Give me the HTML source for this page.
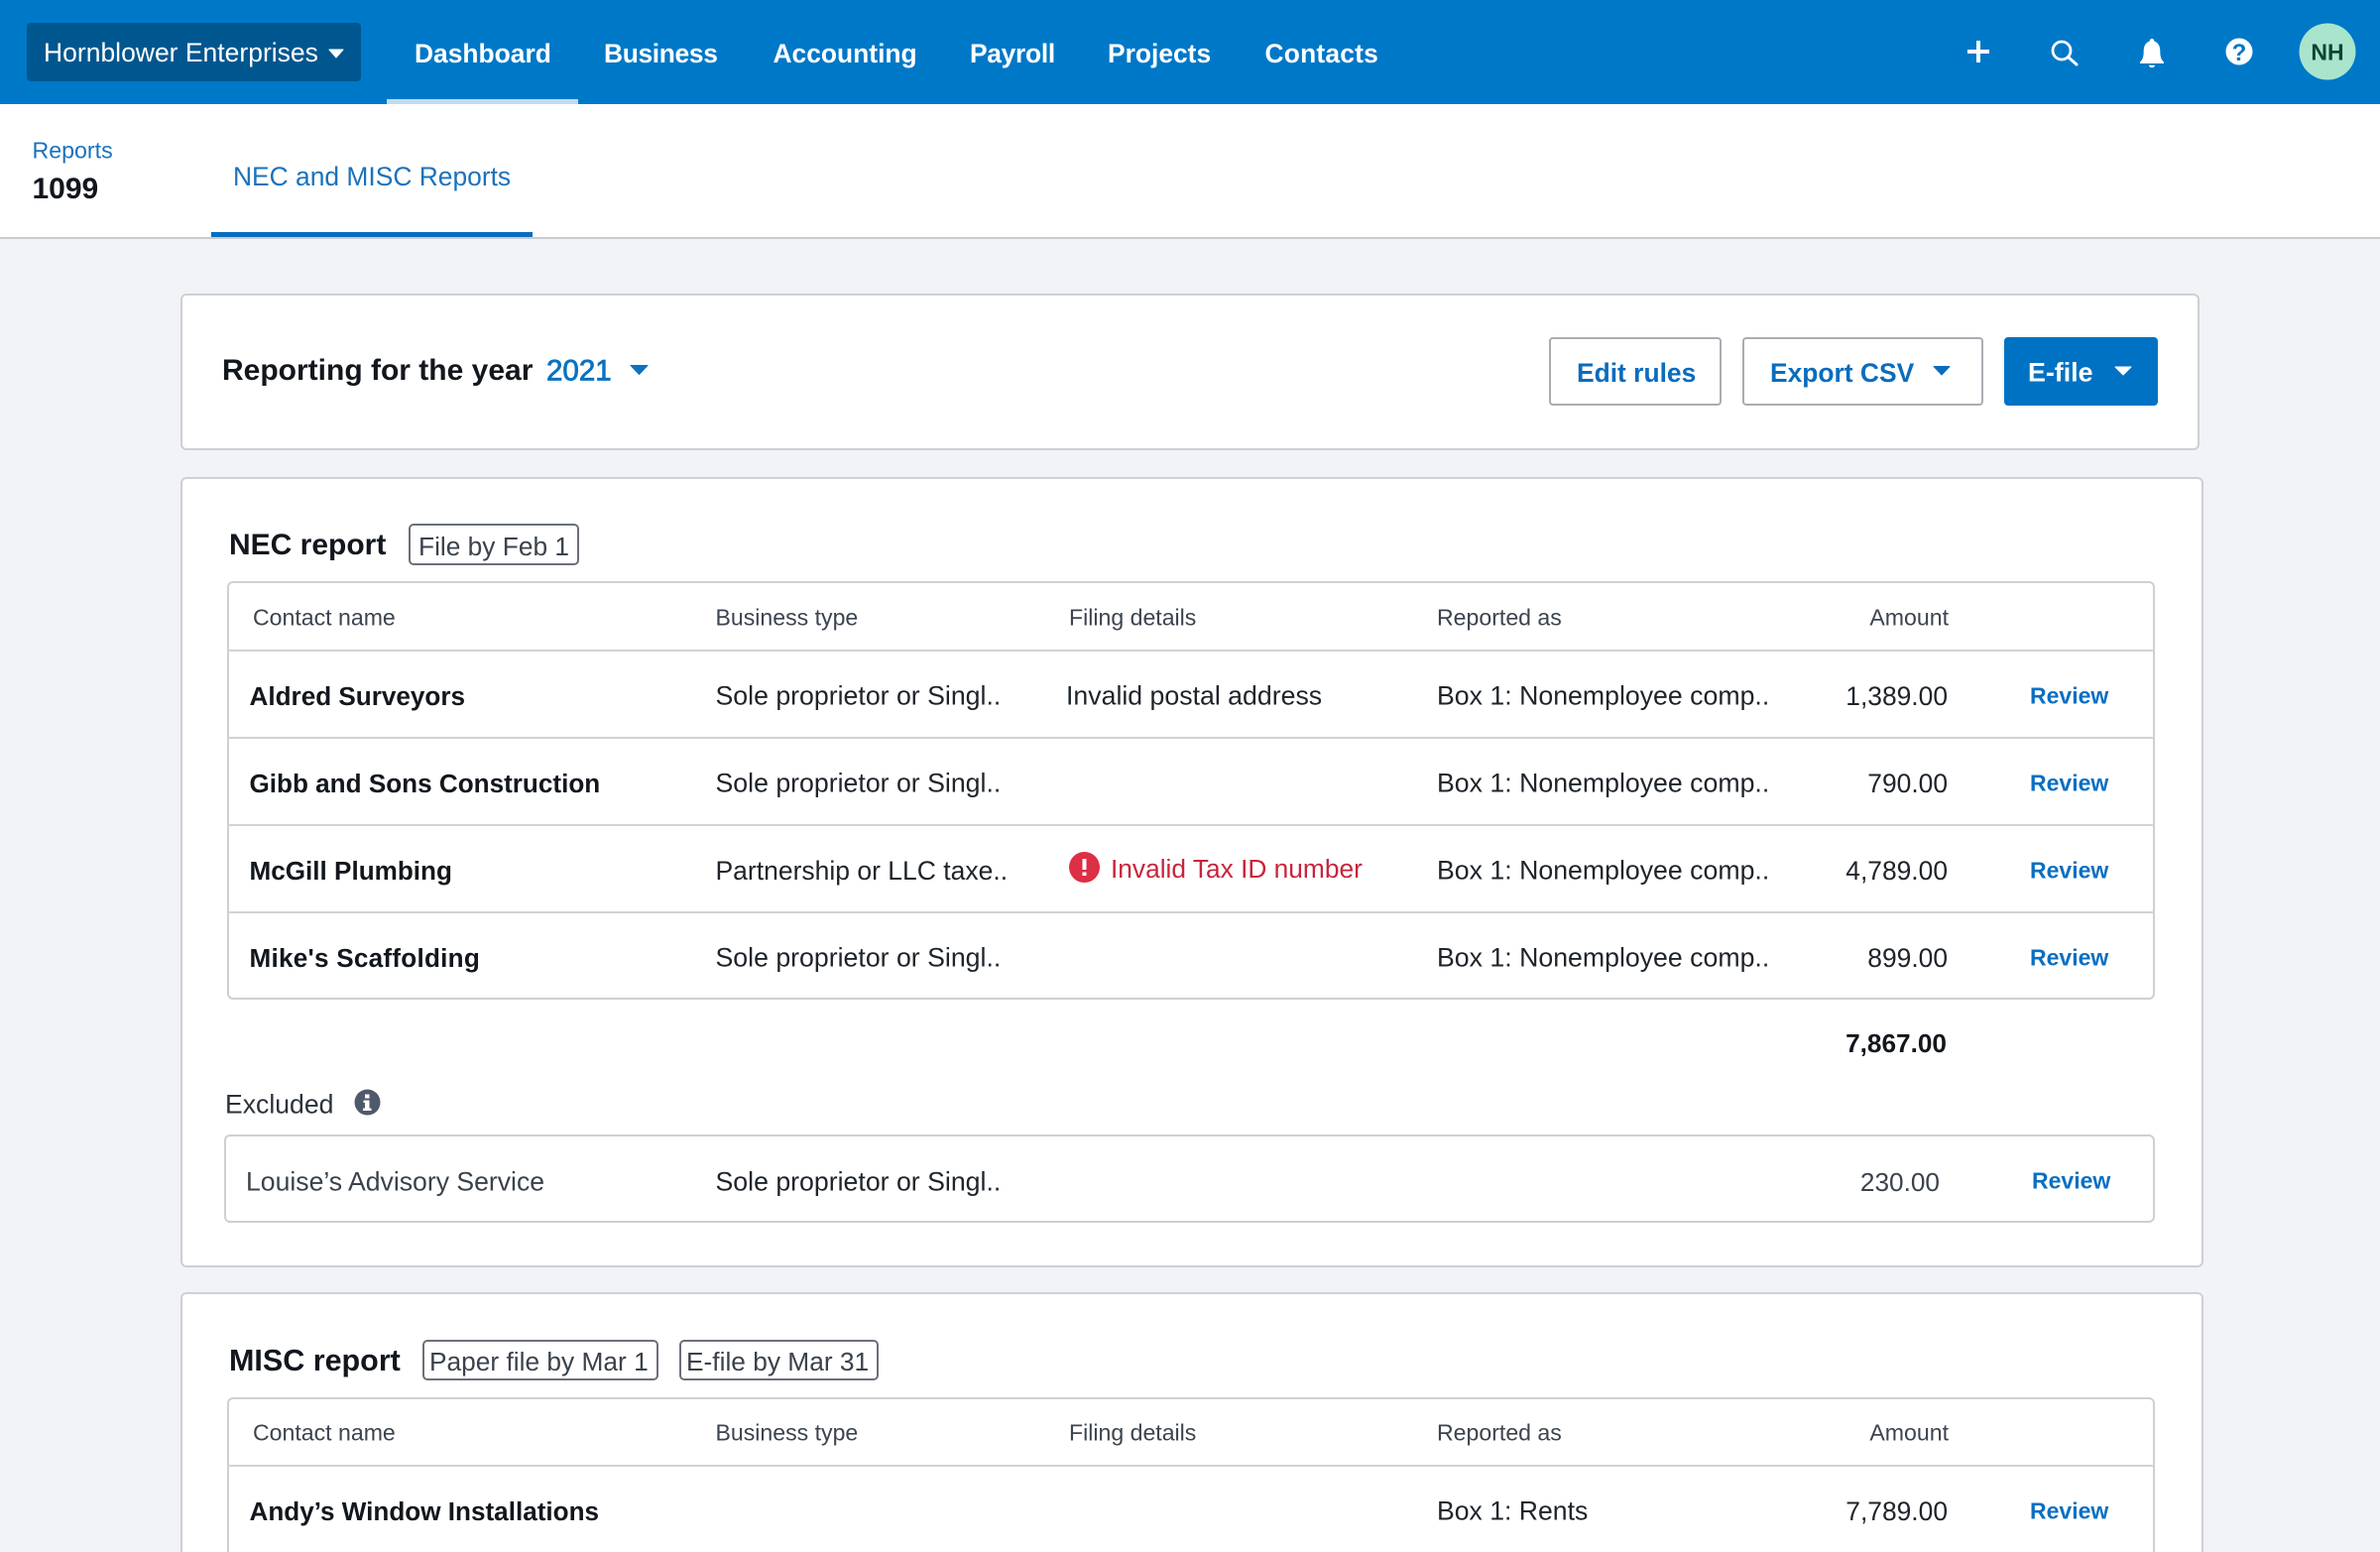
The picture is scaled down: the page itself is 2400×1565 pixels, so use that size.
<!DOCTYPE html>
<html><head><meta charset="utf-8"><title>1099 Reports</title>
<style>
html,body{margin:0;padding:0;width:2400px;height:1565px;overflow:hidden;background:#f2f3f7}
body{position:relative;font-family:"Liberation Sans",Arial,sans-serif;color:#1a1f26}
.t{position:absolute;white-space:nowrap;line-height:1;transform:translateY(-50%)}
.r{transform:translate(-100%,-50%)}
.b{font-weight:700}
.box{position:absolute;box-sizing:border-box;background:#fff;border:2px solid #cdd0d4;border-radius:6px}
.line{position:absolute;height:2px;background:#d0d3d7}
.nav{color:#fff;font-weight:700;font-size:26.4px;top:54px}
.h{font-size:23.1px;color:#3b444f}
.c{font-size:26.7px;color:#1f242b}
.n{font-size:26.1px;font-weight:700;color:#12171d}
.a{color:#0a6fc2;font-size:23px;font-weight:700}
.tag{position:absolute;box-sizing:border-box;border:2px solid #6a7079;border-radius:5px;background:#fff}
.tg{font-size:26.3px;color:#3a424c}
.btn{position:absolute;box-sizing:border-box;height:69px;top:340px;background:#fff;border:2px solid #a9adb2;border-radius:4px}
.bt{font-size:26.4px;font-weight:700;color:#0a6cbd;top:376px}
</style></head><body>
<div style="position:absolute;left:0;top:0;width:2400px;height:105px;background:#0078c8"></div>
<div style="position:absolute;left:27px;top:23px;width:337px;height:59px;background:#00578f;border-radius:4px"></div>
<div class="t" style="left:44px;top:53px;font-size:26.5px;color:#fff">Hornblower Enterprises</div>
<div style="position:absolute;left:390px;top:100px;width:193px;height:5px;background:#c3daf0"></div>
<div class="t nav" style="left:418px">Dashboard</div>
<div class="t nav" style="left:609px;letter-spacing:-.35px">Business</div>
<div class="t nav" style="left:779.500px">Accounting</div>
<div class="t nav" style="left:978px;letter-spacing:-.3px">Payroll</div>
<div class="t nav" style="left:1117px">Projects</div>
<div class="t nav" style="left:1275.500px;letter-spacing:.2px">Contacts</div>

<div style="position:absolute;left:0;top:105px;width:2400px;height:134px;background:#fff"></div>
<div style="position:absolute;left:0;top:239px;width:2400px;height:2px;background:#c9ccd0"></div>
<div style="position:absolute;left:213px;top:234px;width:324px;height:5px;background:#0a6cc0"></div>
<div class="t" style="left:32.500px;top:152px;font-size:23.2px;color:#1a72bd">Reports</div>
<div class="t b" style="left:32.500px;top:191px;font-size:30px;color:#12171d">1099</div>
<div class="t" style="left:235px;top:178px;font-size:26.4px;color:#1a72bd">NEC and MISC Reports</div>

<div class="box" style="left:182px;top:296px;width:2036px;height:158px"></div>
<div class="t b" style="left:224px;top:374px;font-size:30px;color:#12171d">Reporting for the year</div>
<div class="t" style="left:551px;top:374px;font-size:29.500px;color:#0a72c0;-webkit-text-stroke:.8px #0a72c0">2021</div>
<div class="btn" style="left:1562px;width:174px"></div>
<div class="t bt" style="left:1590px">Edit rules</div>
<div class="btn" style="left:1757px;width:243px"></div>
<div class="t bt" style="left:1785px">Export CSV</div>
<div class="btn" style="left:2021px;width:155px;background:#0072c3;border-color:#0072c3"></div>
<div class="t bt" style="left:2045px;color:#fff;font-size:26.8px">E-file</div>

<div class="box" style="left:182px;top:481px;width:2040px;height:797px"></div>
<div class="t b" style="left:231px;top:550px;font-size:30px;color:#12171d">NEC report</div>
<div class="tag" style="left:412px;top:528px;width:172px;height:42px"></div>
<div class="t tg" style="left:422px;top:551px">File by Feb 1</div>

<div class="box" style="left:229px;top:586px;width:1944px;height:422px"></div>
<div class="line" style="left:230px;top:655px;width:1942px"></div>
<div class="line" style="left:230px;top:743px;width:1942px"></div>
<div class="line" style="left:230px;top:831px;width:1942px"></div>
<div class="line" style="left:230px;top:919px;width:1942px"></div>

<div class="t h" style="left:255px;top:623px">Contact name</div>
<div class="t h" style="left:721.500px;top:623px">Business type</div>
<div class="t h" style="left:1078px;top:623px">Filing details</div>
<div class="t h" style="left:1449px;top:623px">Reported as</div>
<div class="t h r" style="left:1965px;top:623px">Amount</div>

<div class="t n" style="left:251.500px;top:702px">Aldred Surveyors</div>
<div class="t c" style="left:721.500px;top:702px">Sole proprietor or Singl..</div>
<div class="t c" style="left:1075px;top:702px">Invalid postal address</div>
<div class="t c" style="left:1449px;top:702px">Box 1: Nonemployee comp..</div>
<div class="t c r" style="left:1964px;top:702px;font-size:26.4px">1,389.00</div>
<div class="t a" style="left:2047px;top:701.500px">Review</div>

<div class="t n" style="left:251.500px;top:790px">Gibb and Sons Construction</div>
<div class="t c" style="left:721.500px;top:790px">Sole proprietor or Singl..</div>
<div class="t c" style="left:1449px;top:790px">Box 1: Nonemployee comp..</div>
<div class="t c r" style="left:1964px;top:790px;font-size:26.4px">790.00</div>
<div class="t a" style="left:2047px;top:789.500px">Review</div>

<div class="t n" style="left:251.500px;top:878px">McGill Plumbing</div>
<div class="t c" style="left:721.500px;top:878px;font-size:26.500px">Partnership or LLC taxe..</div>
<div class="t" style="left:1120px;top:876px;font-size:26.3px;color:#c8243c">Invalid Tax ID number</div>
<div class="t c" style="left:1449px;top:878px">Box 1: Nonemployee comp..</div>
<div class="t c r" style="left:1964px;top:878px;font-size:26.4px">4,789.00</div>
<div class="t a" style="left:2047px;top:877.500px">Review</div>

<div class="t n" style="left:251.500px;top:966px;letter-spacing:.25px">Mike's Scaffolding</div>
<div class="t c" style="left:721.500px;top:966px">Sole proprietor or Singl..</div>
<div class="t c" style="left:1449px;top:966px">Box 1: Nonemployee comp..</div>
<div class="t c r" style="left:1964px;top:966px;font-size:26.4px">899.00</div>
<div class="t a" style="left:2047px;top:965.500px">Review</div>

<div class="t b r" style="left:1963px;top:1052px;font-size:26.2px;color:#12171d">7,867.00</div>
<div class="t" style="left:227px;top:1114px;font-size:26.6px;color:#2b323a">Excluded</div>

<div class="box" style="left:226px;top:1144px;width:1947px;height:89px"></div>
<div class="t" style="left:248px;top:1192px;font-size:26.6px;color:#3a424c">Louise’s Advisory Service</div>
<div class="t c" style="left:721.500px;top:1192px">Sole proprietor or Singl..</div>
<div class="t r" style="left:1956px;top:1191.500px;font-size:26.2px;color:#3a424c">230.00</div>
<div class="t a" style="left:2049px;top:1191px">Review</div>

<div class="box" style="left:182px;top:1303px;width:2040px;height:300px"></div>
<div class="t b" style="left:231px;top:1372px;font-size:30.500px;color:#12171d">MISC report</div>
<div class="tag" style="left:426px;top:1351px;width:238px;height:41px"></div>
<div class="t tg" style="left:433px;top:1373px">Paper file by Mar 1</div>
<div class="tag" style="left:685px;top:1351px;width:201px;height:41px"></div>
<div class="t tg" style="left:692px;top:1373px">E-file by Mar 31</div>

<div class="box" style="left:229px;top:1409px;width:1944px;height:200px"></div>
<div class="line" style="left:230px;top:1477px;width:1942px"></div>
<div class="t h" style="left:255px;top:1445px">Contact name</div>
<div class="t h" style="left:721.500px;top:1445px">Business type</div>
<div class="t h" style="left:1078px;top:1445px">Filing details</div>
<div class="t h" style="left:1449px;top:1445px">Reported as</div>
<div class="t h r" style="left:1965px;top:1445px">Amount</div>
<div class="t n" style="left:251.500px;top:1524px">Andy’s Window Installations</div>
<div class="t c" style="left:1449px;top:1524px;font-size:26.6px">Box 1: Rents</div>
<div class="t c r" style="left:1964px;top:1524px;font-size:26.4px">7,789.00</div>
<div class="t a" style="left:2047px;top:1524px">Review</div>

<svg style="position:absolute;left:0;top:0" width="2400" height="1565" viewBox="0 0 2400 1565">
<g fill="#fff" stroke="#fff" stroke-width="1" stroke-linejoin="round">
<path d="M332 50h14l-7 8z"/>
<path d="M2133 370h16l-8 8z"/>
</g>
<path d="M636 368.500h17l-8.500 9z" fill="#0a72c0" stroke="#0a72c0" stroke-linejoin="round"/>
<path d="M1950 369.500h16l-8 8.500z" fill="#0a6cbd" stroke="#0a6cbd" stroke-linejoin="round"/>
<path d="M1995 41v22M1984 52h22" stroke="#fff" stroke-width="4" fill="none"/>
<circle cx="2079" cy="51" r="9" stroke="#fff" stroke-width="2.800" fill="none"/>
<path d="M2086 58l8 7" stroke="#fff" stroke-width="3" stroke-linecap="round"/>
<path d="M2170 39c1.400 0 2.300 1 2.400 2.600 4 1.300 5.900 5 5.900 9.800 0 6 1.100 8.800 3.700 11.200v1.400h-24v-1.400c2.600-2.400 3.700-5.200 3.700-11.200 0-4.800 1.900-8.500 5.900-9.800.1-1.600 1-2.600 2.400-2.600zM2166.800 65.800h6.400c-.4 1.600-1.600 2.400-3.200 2.400s-2.800-.8-3.200-2.400z" fill="#fff"/>
<circle cx="2258" cy="52" r="13.500" fill="#fff"/>
<text x="2258" y="61" text-anchor="middle" font-family="Liberation Sans, sans-serif" font-weight="700" font-size="24" fill="#0078c8">?</text>
<circle cx="2347" cy="52" r="28.500" fill="#a9e5cd"/>
<text x="2347" y="60.500" text-anchor="middle" font-family="Liberation Sans, sans-serif" font-weight="700" font-size="23" fill="#0c4431">NH</text>
<circle cx="1093.500" cy="874.500" r="15.500" fill="#dd2f45"/>
<path d="M1091.500 866h4v11h-4zM1091.500 879.500h4v3.500h-4z" fill="#fff"/>
<circle cx="370.500" cy="1111.500" r="13" fill="#50596b"/>
<path d="M368 1103.500h4.500v4h-4.500zM366.500 1109.500h6v8h2v2.500h-8.500v-2.500h2v-5.500h-1.500z" fill="#fff"/>
</svg>
</body></html>
